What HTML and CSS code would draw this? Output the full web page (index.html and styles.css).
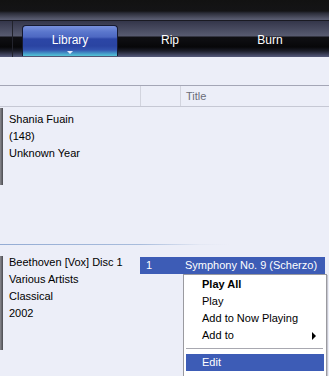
FILE: index.html
```html
<!DOCTYPE html>
<html>
<head>
<meta charset="utf-8">
<link rel="stylesheet" href="styles.css">
</head>
<body>
<div class="app">
  <div class="topbar"></div>
  <div class="tabbar">
    <div class="tab-sep"></div>
    <div class="tabs">
      <div class="tab active">Library<span class="caret"></span></div>
      <div class="tab">Rip</div>
      <div class="tab">Burn</div>
    </div>
  </div>
  <div class="toolstrip"></div>
  <div class="header">
    <div class="col c1"></div>
    <div class="col c2"></div>
    <div class="col c3">Title</div>
  </div>
  <div class="group g1">
    <div class="art"></div>
    <div class="info">
      <div>Shania Fuain</div>
      <div>(148)</div>
      <div>Unknown Year</div>
    </div>
  </div>
  <div class="divider"></div>
  <div class="group g2">
    <div class="art art2"></div>
    <div class="info">
      <div>Beethoven [Vox] Disc 1</div>
      <div>Various Artists</div>
      <div>Classical</div>
      <div>2002</div>
    </div>
    <div class="tracks">
      <div class="track selected"><span class="num">1</span><span class="title">Symphony No. 9 (Scherzo)</span></div>
    </div>
  </div>
  <div class="menu">
    <div class="item bold">Play All</div>
    <div class="item">Play</div>
    <div class="item">Add to Now Playing</div>
    <div class="item sub">Add to<span class="arrow"></span></div>
    <div class="msep"></div>
    <div class="item hl">Edit</div>
  </div>
</div>
</body>
</html>
```
FILE: styles.css
```css
html, body {
  margin: 0;
  padding: 0;
}
body {
  background: #eceef8;
  font-family: Tahoma, "Liberation Sans", Arial, sans-serif;
  font-size: 11px;
  color: #000;
  width: 329px;
  height: 376px;
  overflow: hidden;
}
.app {
  position: relative;
  height: 376px;
}
.topbar {
  height: 20px;
  background: linear-gradient(to bottom, #121212 0px, #141416 11px, #2a2c38 13px, #575a6e 19px, #5c5f74 20px);
  border-bottom: 1px solid #1a1a22;
}
.tabbar {
  height: 36px;
  display: flex;
  background: linear-gradient(to bottom, #34364a 0px, #4c4f64 10px, #585b70 15px, #101014 16px, #070709 26px, #1c1e2a 30px, #4c5070 35px, #565a78 36px);
}
.tab-sep {
  width: 12px;
  border-right: 1px solid #22232c;
}
.tabs {
  display: flex;
  gap: 4px;
  padding-left: 9px;
  padding-top: 4px;
}
.tab {
  width: 96px;
  height: 31px;
  display: flex;
  align-items: center;
  justify-content: center;
  color: #fff;
  font-family: "Liberation Sans", Arial, sans-serif;
  font-size: 12px;
  position: relative;
  box-sizing: border-box;
  padding-bottom: 2px;
}
.tab.active {
  border: 1px solid #161a30;
  border-bottom: none;
  border-radius: 4px 4px 0 0;
  background: linear-gradient(to bottom, #7890dc 0px, #5a76cc 6px, #4d68c2 11px, #2c46a6 13px, #2a44a2 20px, #3454b0 24px, #48a4cc 28px, #5cd4d8 31px);
}
.caret {
  position: absolute;
  left: 44px;
  bottom: 2px;
  width: 0;
  height: 0;
  border-left: 3px solid transparent;
  border-right: 3px solid transparent;
  border-top: 3px solid #e8ecff;
}
.toolstrip {
  height: 28px;
  background: #eceef8;
}
.header {
  height: 20px;
  display: flex;
  border-top: 1px solid #a4a6b6;
  border-bottom: 1px solid #c6c8d4;
  background: #eceef8;
}
.col {
  height: 20px;
  line-height: 20px;
  box-sizing: border-box;
}
.c1 {
  width: 141px;
  border-right: 1px solid #d2d4de;
}
.c2 {
  width: 40px;
  border-right: 1px solid #d2d4de;
}
.c3 {
  flex: 1;
  padding-left: 5px;
  color: #6a6c78;
}
.group {
  display: flex;
  position: relative;
}
.g1 {
  height: 137px;
}
.art {
  width: 3px;
  height: 77px;
  margin-top: 1px;
  background: linear-gradient(to right, #8a8a90, #4a4a50);
}
.art2 {
  margin-top: 11px;
  height: 94px;
}
.info {
  padding-left: 6px;
  padding-top: 4px;
  width: 131px;
  line-height: 17px;
}
.g2 .info {
  padding-top: 9px;
}
.divider {
  height: 1px;
  background: linear-gradient(to right, #94acd4 0px, #a8bcdc 140px, #e4e8f4 200px, #eceef8 230px);
}
.g2 {
  height: 130px;
}
.tracks {
  padding-top: 12px;
}
.track {
  width: 185px;
  height: 17px;
  line-height: 16px;
  display: flex;
  color: #fff;
}
.track.selected {
  background: #3d5cb6;
}
.num {
  width: 45px;
  padding-left: 6px;
  box-sizing: border-box;
}
.title {
  flex: 1;
}
.menu {
  position: absolute;
  left: 183px;
  top: 274px;
  width: 144px;
  height: 110px;
  box-sizing: border-box;
  background: #fff;
  border: 1px solid #9a9aa0;
  box-shadow: 1px 1px 0 #c8c8d0;
  padding: 1px 2px 0 1px;
}
.item {
  height: 17px;
  line-height: 17px;
  padding-left: 17px;
  position: relative;
  font-size: 11px;
}
.item.bold {
  font-weight: bold;
}
.arrow {
  position: absolute;
  right: 8px;
  top: 5px;
  width: 0;
  height: 0;
  border-top: 4px solid transparent;
  border-bottom: 4px solid transparent;
  border-left: 4px solid #000;
}
.msep {
  height: 1px;
  margin: 4px 1px 5px 1px;
  background: #a8a8b0;
}
.item.hl {
  background: #3d5cb6;
  color: #fff;
  margin-left: 1px;
  padding-left: 16px;
}
```
